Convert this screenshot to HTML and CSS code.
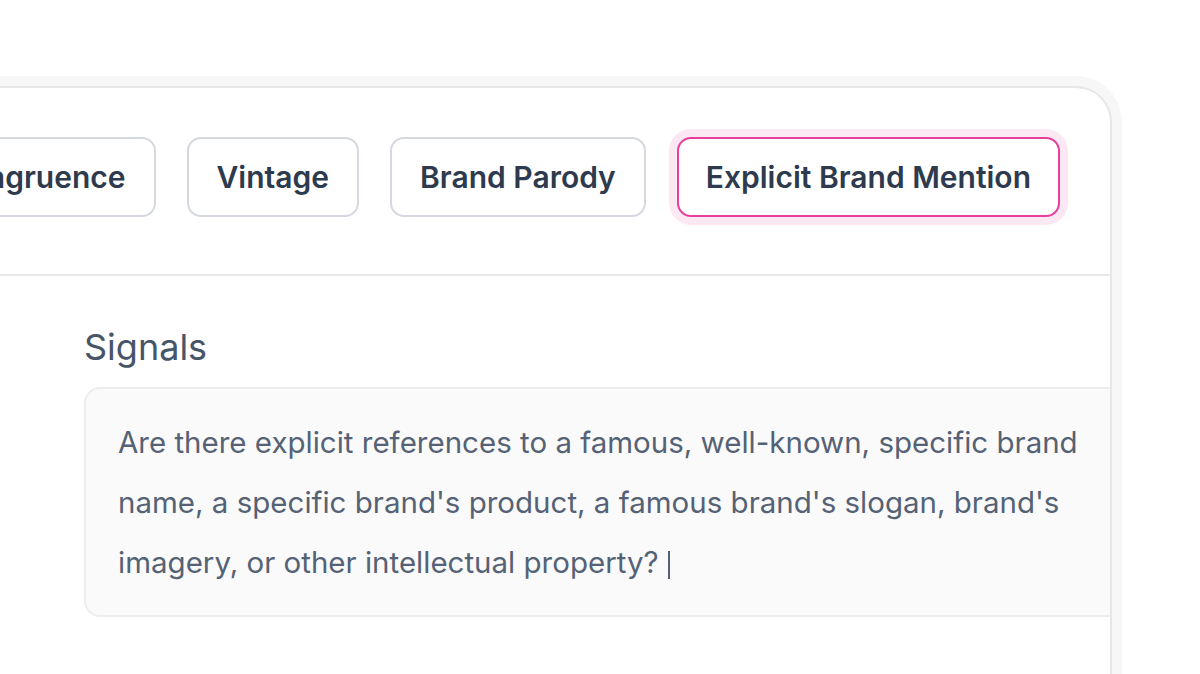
FILE: index.html
```html
<!DOCTYPE html>
<html lang="en">
  <head>
    <meta charset="UTF-8" />
    <meta name="viewport" content="width=device-width, initial-scale=1.0" />
    <title>Signals</title>
    <link rel="stylesheet" href="styles.css">
  </head>
  <body>
    <div class="stage">
      <div class="card">
        <div class="chip-row">
          <button class="chip">Incongruence</button>
          <button class="chip">Vintage</button>
          <button class="chip">Brand Parody</button>
          <button class="chip selected">Explicit Brand Mention</button>
        </div>

        <div class="signals">
          <label class="signals-label">Signals</label>
          <div class="signals-box">
            Are there explicit references to a famous, well-known, specific brand<br />
            name, a specific brand's product, a famous brand's slogan, brand's<br />
            imagery, or other intellectual property?<span class="caret"></span>
          </div>
        </div>
      </div>
    </div>
  </body>
</html>
```

FILE: styles.css
```css
body {
  margin: 0;
  padding: 0;
  font-family: Inter, "Noto Sans", sans-serif;
  background: #ffffff;
  overflow: hidden;
  height: 674px;
}

.stage {
  padding-top: 86px;
}

.card {
  margin-left: -40px;
  width: 1152px;
  height: 588px;
  box-sizing: border-box;
  background: #ffffff;
  border: 2px solid #e7e7ea;
  border-bottom: none;
  border-radius: 36px 36px 0 0;
  box-shadow: 0 0 0 10px #f7f7f8;
  overflow: hidden;
}

.chip-row {
  display: flex;
  justify-content: flex-end;
  gap: 31px;
  padding: 49px 50px 57px 0;
  border-bottom: 2px solid #e8e8eb;
  overflow: hidden;
}

.chip {
  flex-shrink: 0;
  height: 80px;
  padding: 0 28px;
  background: #ffffff;
  border: 2px solid #d5d9df;
  border-radius: 14px;
  font-family: Inter, "Noto Sans", sans-serif;
  font-size: 30px;
  font-weight: 600;
  color: #2e3a4d;
  cursor: pointer;
}

.chip.selected {
  padding: 0 27px;
  border-color: #e83e9c;
  box-shadow: 0 0 0 8px #fce8f3;
}

.signals {
  padding: 49px 0 0 122px;
}

.signals-label {
  display: block;
  font-size: 36px;
  line-height: 44px;
  color: #475569;
  margin-bottom: 18px;
}

.signals-box {
  width: 1100px;
  padding: 23px 32px 23px;
  background: #fafafa;
  border: 2px solid #ededee;
  border-radius: 16px;
  font-size: 29.5px;
  line-height: 60px;
  color: #556275;
  white-space: nowrap;
}

.caret {
  display: inline-block;
  width: 2px;
  height: 28px;
  margin-left: 9px;
  vertical-align: -6px;
  background: #556275;
}
```
